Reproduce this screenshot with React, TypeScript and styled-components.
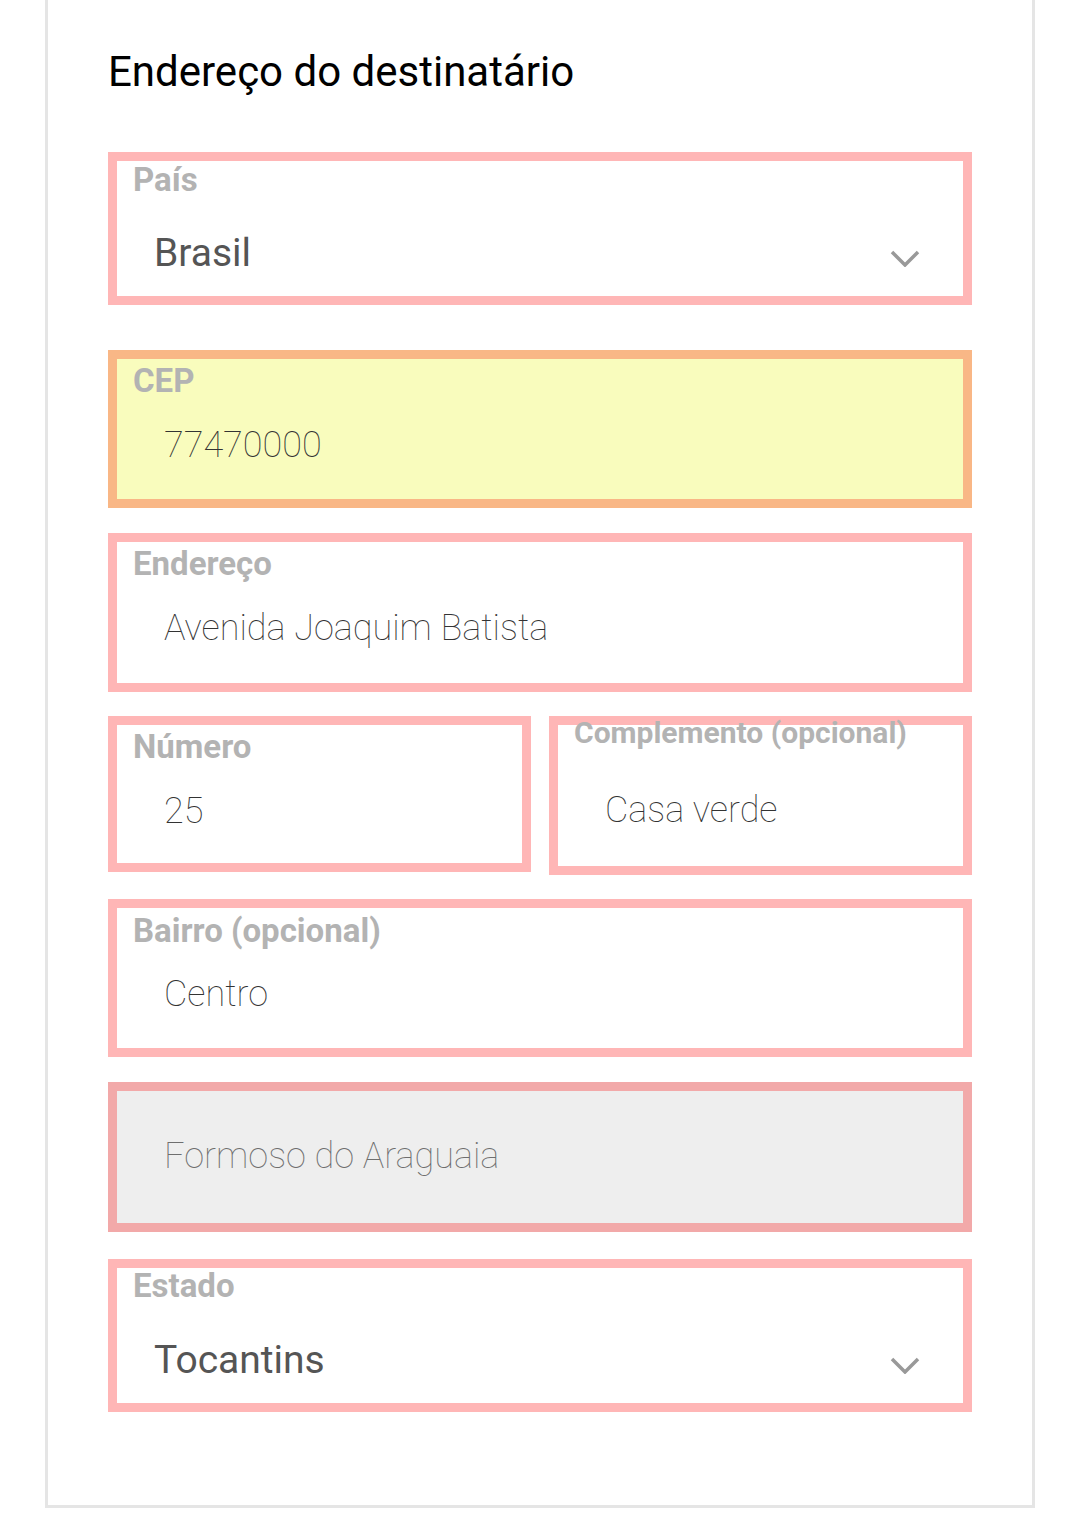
import React from 'react';
import styled, { createGlobalStyle, css } from 'styled-components';

const GlobalStyle = createGlobalStyle`
  html, body {
    margin: 0;
    padding: 0;
    background: #ffffff;
    font-family: Roboto, "Liberation Sans", Arial, sans-serif;
  }
`;

type Variant = 'normal' | 'focused' | 'disabled';

const Card = styled.div`
  box-sizing: border-box;
  width: 990px;
  margin-left: 45px;
  border: 3px solid #e5e5e5;
  border-top: none;
  padding: 48px 60px 93px 60px;
  display: flex;
  flex-direction: column;
`;

const Title = styled.h2`
  margin: 0;
  font-size: 42px;
  line-height: 48px;
  font-weight: 400;
  color: #000;
`;

const Box = styled.div<{ $height: number; $top: number; $variant: Variant; $padTop: number }>`
  position: relative;
  box-sizing: border-box;
  height: ${(p) => p.$height}px;
  margin-top: ${(p) => p.$top}px;
  border: 9px solid #ffb6b6;
  background: #fff;
  padding: ${(p) => p.$padTop}px 43px 0 47px;
  display: flex;
  flex-direction: column;

  ${(p) =>
    p.$variant === 'focused' &&
    css`
      border-color: #f9b786;
      background: #f9fcbd;
    `}

  ${(p) =>
    p.$variant === 'disabled' &&
    css`
      border-color: #f2a9a9;
      background: #eeeeee;
    `}
`;

const Label = styled.span<{ $top: number; $size?: number }>`
  position: absolute;
  left: 16px;
  top: ${(p) => p.$top}px;
  font-size: ${(p) => p.$size ?? 33}px;
  line-height: 36px;
  font-weight: 700;
  color: #b3b3b3;
  white-space: nowrap;
`;

const Value = styled.span<{ $muted?: boolean }>`
  font-size: 36px;
  line-height: 44px;
  font-weight: 100;
  color: ${(p) => (p.$muted ? '#6e6e6e' : '#333')};
  white-space: nowrap;
`;

const SelectRow = styled.div`
  display: flex;
  align-items: center;
  justify-content: space-between;
  margin-left: -10px;
`;

const SelectValue = styled.span`
  font-size: 39px;
  line-height: 48px;
  font-weight: 400;
  color: #555;
`;

const Chevron = styled.svg`
  width: 30px;
  height: 17px;
  margin-top: 10px;
  flex-shrink: 0;
`;

const Row = styled.div`
  display: grid;
  grid-template-columns: 1fr 1fr;
  column-gap: 18px;
  align-items: start;
  margin-top: 24px;
`;

interface FieldProps {
  label?: string;
  labelTop?: number;
  labelSize?: number;
  value: string;
  height: number;
  top: number;
  variant?: Variant;
  padTop?: number;
}

const Field: React.FC<FieldProps> = ({ label, labelTop = 4, labelSize, value, height, top, variant = 'normal', padTop = 64 }) => (
  <Box $height={height} $top={top} $variant={variant} $padTop={padTop}>
    {label && (
      <Label $top={labelTop} $size={labelSize}>
        {label}
      </Label>
    )}
    <Value $muted={variant === 'disabled'}>{value}</Value>
  </Box>
);

const ChevronIcon = () => (
  <Chevron viewBox="0 0 30 17">
    <polyline points="2,2 15,15 28,2" fill="none" stroke="#999" strokeWidth="3.5" />
  </Chevron>
);

const SelectField: React.FC<{ label: string; labelTop: number; value: string; top: number }> = ({ label, labelTop, value, top }) => (
  <Box $height={153} $top={top} $variant="normal" $padTop={68}>
    <Label $top={labelTop}>{label}</Label>
    <SelectRow>
      <SelectValue>{value}</SelectValue>
      <ChevronIcon />
    </SelectRow>
  </Box>
);

export default function App() {
  return (
    <>
      <GlobalStyle />
      <Card>
        <Title>Endereço do destinatário</Title>
        <SelectField label="País" labelTop={1} value="Brasil" top={56} />
        <Field label="CEP" value="77470000" height={158} top={45} variant="focused" />
        <Field label="Endereço" value="Avenida Joaquim Batista" height={159} top={25} />
        <Row>
          <Field label="Número" value="25" height={156} top={0} />
          <Field label="Complemento (opcional)" labelTop={-10} labelSize={30} value="Casa verde" height={159} top={0} padTop={63} />
        </Row>
        <Field label="Bairro (opcional)" labelTop={5} value="Centro" height={158} top={24} />
        <Field value="Formoso do Araguaia" height={150} top={25} variant="disabled" padTop={43} />
        <SelectField label="Estado" labelTop={0} value="Tocantins" top={27} />
      </Card>
    </>
  );
}
